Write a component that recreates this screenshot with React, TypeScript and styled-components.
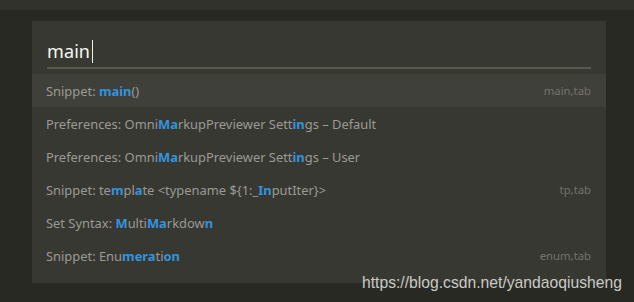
import React from "react";
import styled, { createGlobalStyle } from "styled-components";

const Global = createGlobalStyle`
  html, body { margin: 0; padding: 0; background: #282923; }
  body { width: 634px; height: 302px; overflow: hidden; font-family: "Noto Sans", "Open Sans", sans-serif; }
`;

const Page = styled.div`
  position: relative;
  width: 634px;
  height: 302px;
  background: #282923;
  border-top: 10px solid #31322c;
  box-sizing: border-box;
  padding: 11px 28px 0 32px;
`;

const Panel = styled.div`
  width: 574px;
  height: 262px;
  background: #383833;
  display: flex;
  flex-direction: column;
`;

const InputWrap = styled.div`
  padding: 14px 15px 0 15px;
  height: 53px;
  box-sizing: border-box;
  display: flex;
  flex-direction: column;
`;

const InputText = styled.div`
  font-size: 18px;
  color: #f8f8f2;
  height: 32px;
  display: flex;
  align-items: center;
  letter-spacing: 0.1px;
`;

const Caret = styled.span`
  display: inline-block;
  width: 1px;
  height: 23px;
  background: #f0f0ea;
  margin-left: 2px;
`;

const Underline = styled.div`
  margin-top: auto;
  margin-bottom: 5px;
  height: 2px;
  background: #58584f;
`;

const List = styled.div`
  display: flex;
  flex-direction: column;
`;

const Row = styled.div<{ $selected?: boolean }>`
  height: 33px;
  display: flex;
  align-items: center;
  justify-content: space-between;
  padding: 0 15px 0 14px;
  background: ${(p) => (p.$selected ? "#40403a" : "transparent")};
`;

const Label = styled.span`
  font-size: 12.9px;
  color: #9a9a93;
  white-space: pre;
`;

const Hit = styled.b`
  color: #3393de;
  font-weight: 700;
`;

const Hint = styled.span`
  font-size: 11.3px;
  color: #72726c;
`;

const Watermark = styled.div`
  position: absolute;
  left: 362px;
  top: 264px;
  font-family: "Liberation Sans", Arial, sans-serif;
  font-size: 15.7px;
  color: #c9c9c6;
`;

type Part = string | { h: string };

const items: { parts: Part[]; hint?: string; selected?: boolean }[] = [
  { parts: ["Snippet: ", { h: "main" }, "()"], hint: "main,tab", selected: true },
  { parts: ["Preferences: Omni", { h: "Ma" }, "rkupPreviewer Sett", { h: "in" }, "gs \u2013 Default"] },
  { parts: ["Preferences: Omni", { h: "Ma" }, "rkupPreviewer Sett", { h: "in" }, "gs \u2013 User"] },
  { parts: ["Snippet: te", { h: "m" }, "pl", { h: "a" }, "te <typename ${1:_", { h: "In" }, "putIter}>"], hint: "tp,tab" },
  { parts: ["Set Syntax: ", { h: "M" }, "ulti", { h: "Ma" }, "rkdow", { h: "n" }] },
  { parts: ["Snippet: Enu", { h: "mer" }, { h: "a" }, "ti", { h: "on" }], hint: "enum,tab" },
];

export default function App() {
  return (
    <>
      <Global />
      <Page>
        <Panel>
          <InputWrap>
            <InputText>
              main
              <Caret />
            </InputText>
            <Underline />
          </InputWrap>
          <List>
            {items.map((it, i) => (
              <Row key={i} $selected={it.selected}>
                <Label>
                  {it.parts.map((p, j) =>
                    typeof p === "string" ? <React.Fragment key={j}>{p}</React.Fragment> : <Hit key={j}>{p.h}</Hit>
                  )}
                </Label>
                {it.hint && <Hint>{it.hint}</Hint>}
              </Row>
            ))}
          </List>
        </Panel>
        <Watermark>https://blog.csdn.net/yandaoqiusheng</Watermark>
      </Page>
    </>
  );
}
